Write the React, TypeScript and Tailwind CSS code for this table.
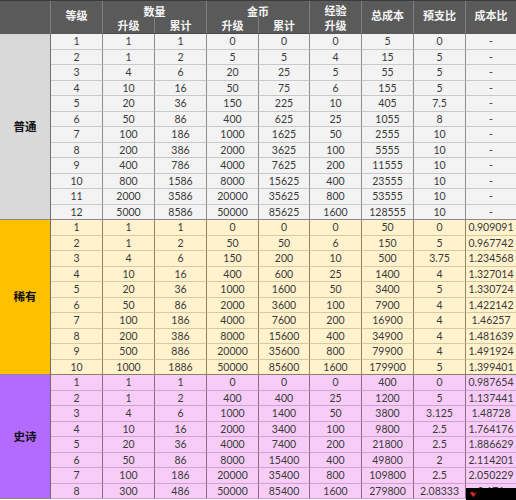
import React from 'react'

type Group = {
  name: string
  label: string
  cell: string
  vb: string
  hb: string
  lastHb: string
  span: string
  rows: (string | number)[][]
}

const groups: Group[] = [
  {
    name: '普通',
    label: 'bg-[#d9d9d9]',
    cell: 'bg-[#f3f3f3]',
    vb: 'border-r-[#8e8e8e]',
    hb: 'border-b-[#c9c9c9]',
    lastHb: 'border-b-[#8a8a8a]',
    span: 'row-span-12',
    rows: [
      [1, 1, 1, 0, 0, 0, 5, 0, '-'],
      [2, 1, 2, 5, 5, 4, 15, 5, '-'],
      [3, 4, 6, 20, 25, 5, 55, 5, '-'],
      [4, 10, 16, 50, 75, 6, 155, 5, '-'],
      [5, 20, 36, 150, 225, 10, 405, 7.5, '-'],
      [6, 50, 86, 400, 625, 25, 1055, 8, '-'],
      [7, 100, 186, 1000, 1625, 50, 2555, 10, '-'],
      [8, 200, 386, 2000, 3625, 100, 5555, 10, '-'],
      [9, 400, 786, 4000, 7625, 200, 11555, 10, '-'],
      [10, 800, 1586, 8000, 15625, 400, 23555, 10, '-'],
      [11, 2000, 3586, 20000, 35625, 800, 53555, 10, '-'],
      [12, 5000, 8586, 50000, 85625, 1600, 128555, 10, '-'],
    ],
  },
  {
    name: '稀有',
    label: 'bg-[#ffc000]',
    cell: 'bg-[#fff2cc]',
    vb: 'border-r-[#8f8466]',
    hb: 'border-b-[#d8caa0]',
    lastHb: 'border-b-[#8a7f60]',
    span: 'row-span-10',
    rows: [
      [1, 1, 1, 0, 0, 0, 50, 0, '0.909091'],
      [2, 1, 2, 50, 50, 6, 150, 5, '0.967742'],
      [3, 4, 6, 150, 200, 10, 500, 3.75, '1.234568'],
      [4, 10, 16, 400, 600, 25, 1400, 4, '1.327014'],
      [5, 20, 36, 1000, 1600, 50, 3400, 5, '1.330724'],
      [6, 50, 86, 2000, 3600, 100, 7900, 4, '1.422142'],
      [7, 100, 186, 4000, 7600, 200, 16900, 4, '1.46257'],
      [8, 200, 386, 8000, 15600, 400, 34900, 4, '1.481639'],
      [9, 500, 886, 20000, 35600, 800, 79900, 4, '1.491924'],
      [10, 1000, 1886, 50000, 85600, 1600, 179900, 5, '1.399401'],
    ],
  },
  {
    name: '史诗',
    label: 'bg-[#b36bff]',
    cell: 'bg-[#f7cdf7]',
    vb: 'border-r-[#8c6a8c]',
    hb: 'border-b-[#cfa3cf]',
    lastHb: 'border-b-[#cfa3cf]',
    span: 'row-span-8',
    rows: [
      [1, 1, 1, 0, 0, 0, 400, 0, '0.987654'],
      [2, 1, 2, 400, 400, 25, 1200, 5, '1.137441'],
      [3, 4, 6, 1000, 1400, 50, 3800, 3.125, '1.48728'],
      [4, 10, 16, 2000, 3400, 100, 9800, 2.5, '1.764176'],
      [5, 20, 36, 4000, 7400, 200, 21800, 2.5, '1.886629'],
      [6, 50, 86, 8000, 15400, 400, 49800, 2, '2.114201'],
      [7, 100, 186, 20000, 35400, 800, 109800, 2.5, '2.050229'],
      [8, 300, 486, 50000, 85400, 1600, 279800, '2.08333', '2.171'],
    ],
  },
]

// header cell base
const hd = "flex items-center justify-center border-r border-[#7d7d7d] bg-[#5a5a5a] text-[#f4f4f4] text-[11px] font-bold leading-[13px] font-['Noto_Sans_CJK_SC',sans-serif]"

export default function App() {
  return (
    <div className="relative w-[516px] h-[500px] bg-white overflow-hidden font-['Lato','Noto_Sans_CJK_SC',sans-serif]">
      <div className="grid grid-cols-[51px_52px_52px_52px_52px_51px_52px_52px_52px_50px] grid-rows-[16px_17px_repeat(30,15.5px)] border-t border-[#3c3c3c]">
        {/* header */}
        <div className={`${hd} row-span-2`} />
        <div className={`${hd} row-span-2 pb-1`}>等级</div>
        <div className={`${hd} col-span-2 pt-1`}>数量</div>
        <div className={`${hd} col-span-2 pt-1`}>金币</div>
        <div className={`${hd} row-span-2 flex-col gap-[2px]`}>
          <span>经验</span>
          <span>升级</span>
        </div>
        <div className={`${hd} row-span-2 pb-1`}>总成本</div>
        <div className={`${hd} row-span-2 pb-1`}>预支比</div>
        <div className={`${hd} row-span-2 pb-1 border-r-0`}>成本比</div>
        {['升级', '累计', '升级', '累计'].map((t, i) => (
          <div key={i} className={`${hd} border-b border-b-[#4a4a4a]`}>{t}</div>
        ))}

        {/* body */}
        {groups.map(g => (
          <React.Fragment key={g.name}>
            <div
              className={`${g.span} col-start-1 flex items-center justify-center border-r border-b border-r-[#6e6e6e] border-b-[#8a8a8a] ${g.label} text-[11.5px] font-bold text-[#111] font-['Noto_Sans_CJK_SC',sans-serif]`}
            >
              {g.name}
            </div>
            {g.rows.map((r, ri) =>
              r.map((v, ci) => (
                <div
                  key={`${ri}-${ci}`}
                  className={`flex items-center justify-center whitespace-nowrap border-b ${ci < 8 ? 'border-r' : ''} ${g.vb} ${ri === g.rows.length - 1 ? g.lastHb : g.hb} ${g.cell} text-[10.5px] leading-none text-[#3a3a3a]`}
                >
                  {v}
                </div>
              ))
            )}
          </React.Fragment>
        ))}
      </div>

      {/* watermark */}
      <div className="absolute right-0 bottom-0 flex items-center w-[50px] h-[12px] bg-black pl-[3px]">
        <svg width="9" height="9" viewBox="0 0 10 10">
          <path d="M1 3 L5 8 L9 2 L6 4 L4 2 Z" fill="#d9262c" />
        </svg>
      </div>
    </div>
  )
}
